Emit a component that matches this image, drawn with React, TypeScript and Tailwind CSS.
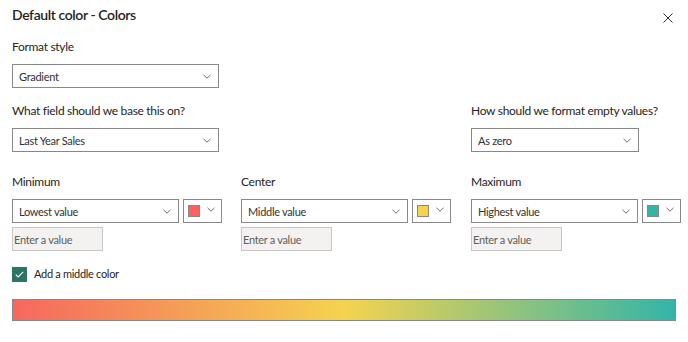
const font = { fontFamily: 'Lato, "Open Sans", sans-serif' };

const Chevron = ({ className = "" }: { className?: string }) => (
  <svg width="8" height="5" viewBox="0 0 8 5" className={className}>
    <path d="M0.5 0.8 L4 4.2 L7.5 0.8" fill="none" stroke="#605e5c" strokeWidth="0.9" />
  </svg>
);

const Dropdown = ({ value, width }: { value: string; width: string }) => (
  <div
    className={`${width} h-6 border border-[#8a8886] bg-white flex items-center justify-between pl-[6px] pr-[7px]`}
  >
    <span className="text-[11px] tracking-[-0.3px] text-[#323130] leading-none">{value}</span>
    <Chevron />
  </div>
);

const ColorPicker = ({ color }: { color: string }) => (
  <div className="w-[39px] h-6 border border-[#8a8886] bg-white flex items-start pl-[4px] pt-[5px] gap-[7px]">
    <div className="w-3 h-3 border border-[#8a8886]" style={{ backgroundColor: color }} />
    <Chevron className="mt-[2px]" />
  </div>
);

const ValueInput = () => (
  <div className="w-[91px] h-6 border border-[#c8c6c4] bg-[#f3f2f1] flex items-center pl-[1px]">
    <span className="text-[11px] tracking-[-0.3px] text-[#605e5c] leading-none">Enter a value</span>
  </div>
);

const Label = ({ children }: { children: string }) => (
  <div className="h-4 leading-4 text-[12px] tracking-[-0.3px] whitespace-nowrap text-[#252423]">
    {children}
  </div>
);

const Stop = ({ label, value, color }: { label: string; value: string; color: string }) => (
  <div>
    <Label>{label}</Label>
    <div className="mt-[9px] flex gap-[4px]">
      <Dropdown value={value} width="w-[167px]" />
      <ColorPicker color={color} />
    </div>
    <div className="mt-[4px]">
      <ValueInput />
    </div>
  </div>
);

export default function App() {
  return (
    <div className="w-[688px] h-[342px] bg-white relative px-3" style={font}>
      <div className="h-[30px] leading-[30px] text-[14px] font-semibold text-[#252423] tracking-[-0.4px]">
        Default color - Colors
      </div>
      <button className="absolute right-[14px] top-[12px] w-3 h-3 flex items-center justify-center">
        <svg width="10" height="10" viewBox="0 0 10 10">
          <path d="M0.5 0.5 L9.5 9.5 M9.5 0.5 L0.5 9.5" stroke="#323130" strokeWidth="1" />
        </svg>
      </button>

      <div className="mt-[9px]">
        <Label>Format style</Label>
      </div>
      <div className="mt-[9px]">
        <Dropdown value="Gradient" width="w-[207px]" />
      </div>

      <div className="mt-[15px] grid grid-cols-[459px_1fr]">
        <div>
          <Label>What field should we base this on?</Label>
          <div className="mt-[9px]">
            <Dropdown value="Last Year Sales" width="w-[207px]" />
          </div>
        </div>
        <div>
          <Label>How should we format empty values?</Label>
          <div className="mt-[9px]">
            <Dropdown value="As zero" width="w-[168px]" />
          </div>
        </div>
      </div>

      <div className="mt-[22px] grid grid-cols-[229px_230px_1fr]">
        <Stop label="Minimum" value="Lowest value" color="#fd625e" />
        <Stop label="Center" value="Middle value" color="#f5d34f" />
        <Stop label="Maximum" value="Highest value" color="#32b5a8" />
      </div>

      <div className="mt-[16px] flex items-center gap-[7px] h-[15px]">
        <div className="w-[15px] h-[15px] bg-[#2b7566] flex items-center justify-center">
          <svg width="9" height="7" viewBox="0 0 9 7">
            <path d="M0.8 3.6 L3.2 5.9 L8.2 0.9" fill="none" stroke="white" strokeWidth="1.1" />
          </svg>
        </div>
        <span className="text-[11px] tracking-[-0.3px] text-[#252423]">Add a middle color</span>
      </div>

      <div className="mt-[17px] w-[664px] h-[22px] border border-[#8a8886] bg-[linear-gradient(to_right,#f6675f,#f5d34f_50%,#33b5a8)]" />
    </div>
  );
}
